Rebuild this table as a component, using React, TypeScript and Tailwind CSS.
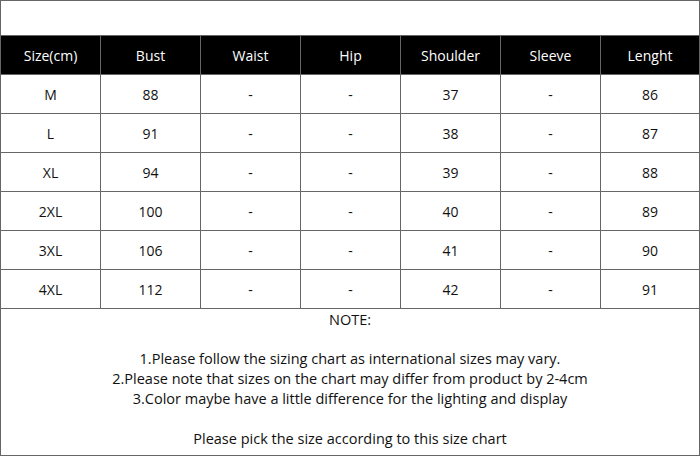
const headers = ['Size(cm)', 'Bust', 'Waist', 'Hip', 'Shoulder', 'Sleeve', 'Lenght']

const rows = [
    ['M', '88', '-', '-', '37', '-', '86'],
    ['L', '91', '-', '-', '38', '-', '87'],
    ['XL', '94', '-', '-', '39', '-', '88'],
    ['2XL', '100', '-', '-', '40', '-', '89'],
    ['3XL', '106', '-', '-', '41', '-', '90'],
    ['4XL', '112', '-', '-', '42', '-', '91'],
]

const cols = 'grid grid-cols-[99px_repeat(5,100px)_99px] border-t border-[#666] h-[39px]'

const App = () => {
    return (
        <div
            className="w-[700px] h-[456px] bg-white border border-[#666] flex flex-col text-[14px] text-[#111]"
            style={{ fontFamily: '"Open Sans", "Noto Sans", sans-serif' }}
        >
            <div className="h-[34px]" />

            <div className={cols}>
                {headers.map((h, i) => (
                    <div
                        key={h}
                        className={`bg-black text-white flex items-center justify-center ${i > 0 ? 'border-l border-[#666]' : ''}`}
                    >
                        {h}
                    </div>
                ))}
            </div>

            {rows.map((r) => (
                <div key={r[0]} className={cols}>
                    {r.map((v, i) => (
                        <div
                            key={i}
                            className={`flex items-center justify-center ${i > 0 ? 'border-l border-[#666]' : ''}`}
                        >
                            {v}
                        </div>
                    ))}
                </div>
            ))}

            <div className="flex-1 border-t border-[#666] flex flex-col items-center pt-[1px] leading-[20px] text-[14.5px]">
                <p>NOTE:</p>
                <p className="mt-[19px]">1.Please follow the sizing chart as international sizes may vary.</p>
                <p>2.Please note that sizes on the chart may differ from product by 2-4cm</p>
                <p>3.Color maybe have a little difference for the lighting and display</p>
                <p className="mt-[20px]">Please pick the size according to this size chart</p>
            </div>
        </div>
    )
}

export default App
